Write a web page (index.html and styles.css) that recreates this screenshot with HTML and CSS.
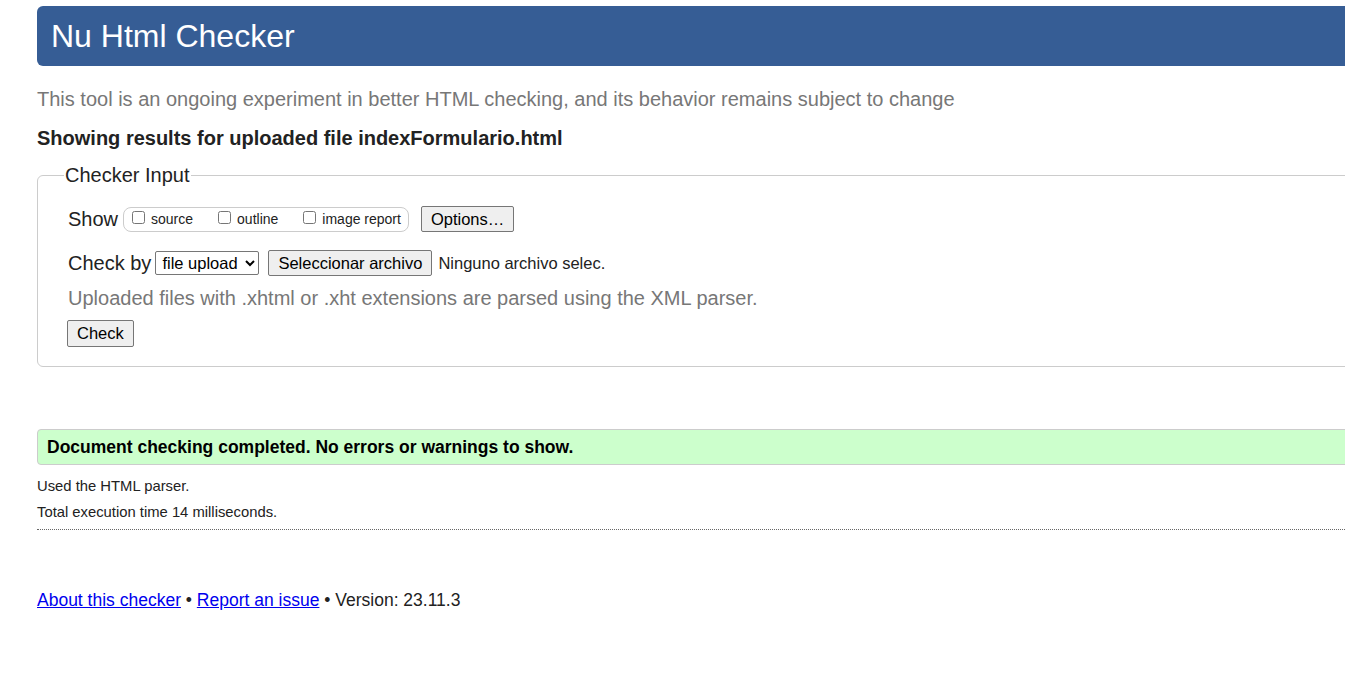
FILE: index.html
```html
<!DOCTYPE html>
<html lang="en">
<head>
<meta charset="utf-8">
<title>Nu Html Checker</title>
<link rel="stylesheet" href="styles.css">
</head>
<body>
<div class="page">
  <header class="banner"><h1>Nu Html Checker</h1></header>
  <p class="tagline">This tool is an ongoing experiment in better HTML checking, and its behavior remains subject to change</p>
  <p class="showing">Showing results for uploaded file indexFormulario.html</p>
  <fieldset class="input-box">
    <legend>Checker Input</legend>
    <div class="row show-row">
      <span class="lbl">Show</span>
      <span class="opts">
        <label><input type="checkbox"> source</label>
        <label><input type="checkbox"> outline</label>
        <label><input type="checkbox"> image report</label>
      </span>
      <button class="btn">Options…</button>
    </div>
    <div class="row check-row">
      <span class="lbl">Check by</span>
      <select class="sel"><option>file upload</option></select>
      <button class="btn file-btn">Seleccionar archivo</button>
      <span class="nofile">Ninguno archivo selec.</span>
    </div>
    <p class="hint">Uploaded files with .xhtml or .xht extensions are parsed using the XML parser.</p>
    <button class="btn check-btn">Check</button>
  </fieldset>
  <div class="success">Document checking completed. No errors or warnings to show.</div>
  <p class="details">Used the HTML parser.</p>
  <p class="details">Total execution time 14 milliseconds.</p>
  <hr class="dotted">
  <p class="footer"><a href="#">About this checker</a> • <a href="#">Report an issue</a> • Version: 23.11.3</p>
</div>
</body>
</html>
```

FILE: styles.css
```css
html, body {
  margin: 0;
  padding: 0;
  overflow: hidden;
  background: #fff;
}
body {
  font-family: "Liberation Sans", Arial, sans-serif;
  color: #222;
}
.page {
  width: 1400px;
  padding: 6px 0 0 37px;
}
.banner {
  background: #365d95;
  border-radius: 6px;
  height: 60px;
  display: flex;
  align-items: center;
  padding-left: 14px;
}
.banner h1 {
  margin: 0;
  color: #fff;
  font-weight: normal;
  font-size: 32px;
  line-height: 1;
}
.tagline {
  margin: 21px 0 0;
  color: #777;
  font-size: 20px;
  line-height: 24px;
}
.showing {
  margin: 15px 0 0;
  font-size: 20px;
  font-weight: bold;
  line-height: 24px;
}
.input-box {
  margin: 13px 0 0;
  border: 1px solid #ccc;
  border-radius: 6px;
  padding: 15px 29px 19px 30px;
}
.input-box legend {
  font-size: 20px;
  padding: 0 1px;
  margin-left: -4px;
  color: #222;
  line-height: 24px;
}
.row {
  display: flex;
  align-items: center;
  font-size: 20px;
}
.lbl {
  margin-right: 4px;
}
.show-row {
  height: 34px;
}
.show-row .lbl {
  margin-right: 5px;
}
.opts {
  display: inline-flex;
  align-items: center;
  border: 1px solid #ccc;
  border-radius: 8px;
  height: 23px;
  padding: 0 7px 0 8px;
  font-size: 14px;
  margin-right: 12px;
}
.opts label {
  display: inline-flex;
  align-items: center;
  margin-right: 25px;
  color: #222;
}
.opts label:last-child { margin-right: 0; }
.opts input {
  margin: 0 6px 3px 0;
  width: 13px;
  height: 13px;
}
.btn {
  font-family: "Liberation Sans", Arial, sans-serif;
  font-size: 16.5px;
  background: #efefef;
  border: 1px solid #767676;
  border-radius: 2px;
  color: #000;
  padding: 3px 9px 2px;
  line-height: 19px;
}
.check-row {
  margin-top: 10px;
  height: 34px;
}
.sel {
  font-family: "Liberation Sans", Arial, sans-serif;
  font-size: 16.5px;
  height: 24px;
  border: 1px solid #767676;
  border-radius: 2px;
  background: #fff;
  color: #000;
  margin-right: 9px;
  padding: 0 4px 0 2px;
}
.file-btn {
  padding: 3px 9px 2px;
  margin-right: 6px;
}
.nofile {
  font-size: 16.5px;
  color: #222;
}
.hint {
  margin: 0;
  color: #777;
  font-size: 20px;
  line-height: 36px;
}
.check-btn {
  margin-top: 4px;
  margin-left: -1px;
  padding: 3px 9px 3px;
}
.success {
  margin-top: 62px;
  background: #ccffcc;
  border: 1px solid #ccc;
  border-radius: 4px;
  height: 36px;
  box-sizing: border-box;
  display: flex;
  align-items: center;
  padding-left: 9px;
  font-size: 17.5px;
  font-weight: bold;
  color: #000;
}
.details {
  margin: 0;
  font-size: 14.8px;
  line-height: 26px;
  color: #222;
}
.success + .details { margin-top: 8px; }
.dotted {
  margin: 4px 0 0;
  border: 0;
  border-top: 1px dotted #666;
  height: 0;
}
.footer {
  margin: 59px 0 0;
  font-size: 17.5px;
  line-height: 22px;
  color: #222;
}
.footer a { color: #0000ee; }
```
